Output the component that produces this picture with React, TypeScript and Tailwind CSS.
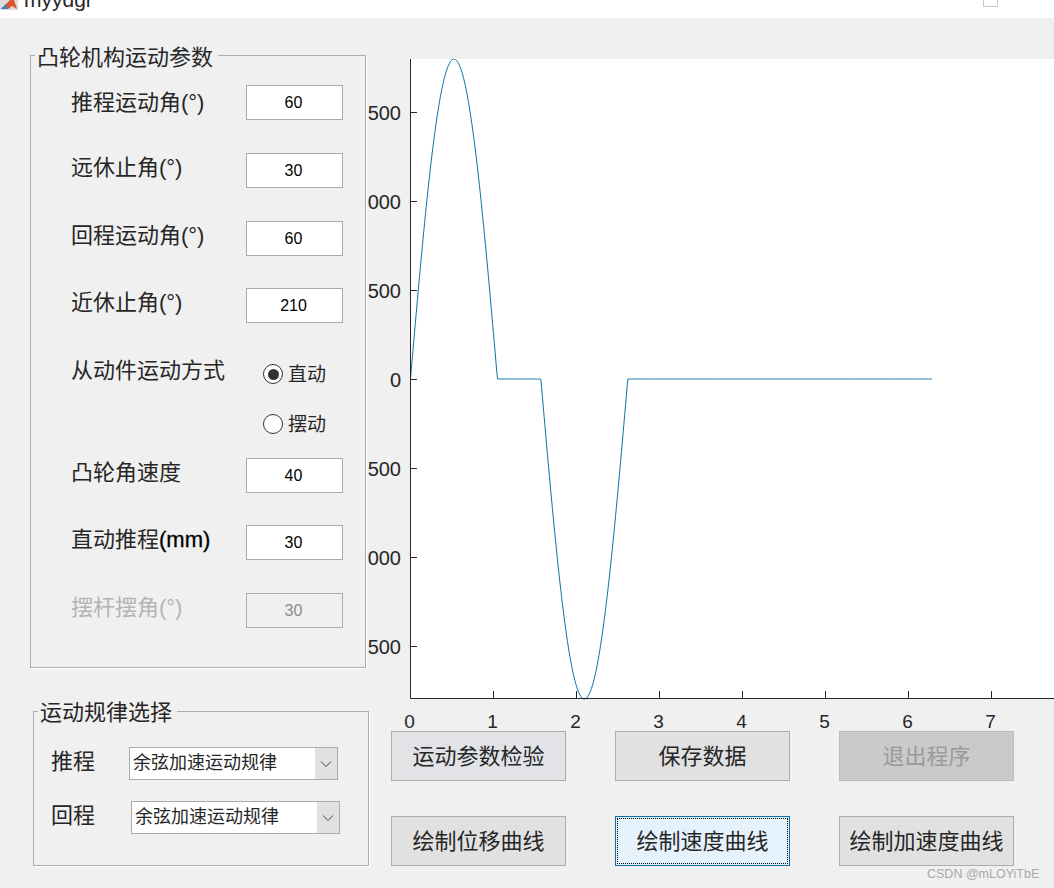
import { ReactNode } from 'react'

const FONT = "font-['Liberation_Sans','Noto_Sans_CJK_SC',sans-serif]"

// velocity curve: x origin 410.5 (83px per unit), y zero at 379 (89px per 500)
function buildCurve() {
  const pts: string[] = []
  const ox = 44.5
  const oy = 320
  const step = 0.01
  for (let t = 0; t <= 6.2832; t += step) {
    let v = 0
    if (t < Math.PI / 3) v = Math.sin(3 * t)
    else if (t >= Math.PI / 2 && t < (5 * Math.PI) / 6) v = -Math.sin(3 * (t - Math.PI / 2))
    pts.push(`${(ox + t * 83).toFixed(2)},${(oy - v * 320).toFixed(2)}`)
  }
  return pts.join(' ')
}

function Plot() {
  const yTicks = [
    { y: 53, label: '500' },
    { y: 142, label: '000' },
    { y: 231, label: '500' },
    { y: 320, label: '0' },
    { y: 409, label: '500' },
    { y: 498, label: '000' },
    { y: 587, label: '500' },
  ]
  const xTicks = [0, 1, 2, 3, 4, 5, 6, 7]
  return (
    <svg width="688" height="672" className="block shrink-0">
      <rect x="44" y="0" width="644" height="639" fill="#ffffff" />
      <polyline points={buildCurve()} fill="none" stroke="#0a72ad" strokeWidth="1" />
      <path d="M44.5 0V639.5H688" fill="none" stroke="#262626" strokeWidth="1" />
      {yTicks.map((t) => (
        <g key={t.y}>
          <path d={`M44.5 ${t.y + 0.5}H51`} stroke="#262626" />
          <text x="35" y={t.y + 8} textAnchor="end" fontSize="20" fill="#262626" fontFamily="Liberation Sans">
            {t.label}
          </text>
        </g>
      ))}
      {xTicks.map((n) => (
        <g key={n}>
          <path d={`M${44.5 + n * 83} 639V632`} stroke="#262626" />
          <text x={43.5 + n * 83} y="669" textAnchor="middle" fontSize="19" fill="#262626" fontFamily="Liberation Sans">
            {n}
          </text>
        </g>
      ))}
    </svg>
  )
}

function Group({ title, className, legendClass, children }: {
  title: string
  className: string
  legendClass: string
  children: ReactNode
}) {
  return (
    <fieldset className={`border border-[#adadad] shadow-[1px_1px_0_#ffffff] ${className}`}>
      <legend className={`relative ml-[4px] pl-[2px] pr-[5px] text-[22px] leading-[22px] text-[#262626] ${legendClass}`}>{title}</legend>
      {children}
    </fieldset>
  )
}

function ParamRow({ label, value, className = '', disabled = false, labelClass = '-mt-[6px]' }: {
  label: ReactNode
  value: string
  className?: string
  disabled?: boolean
  labelClass?: string
}) {
  return (
    <div className={`flex h-[35px] items-center pl-[40px] ${className}`}>
      <span className={`w-[175px] text-[22px] ${labelClass} ${disabled ? 'text-[#b4b4b4]' : 'text-[#262626]'}`}>{label}</span>
      <div
        className={`flex h-[35px] w-[97px] items-center justify-center border border-[#ababab] pr-[2px] text-[16px] ${
          disabled ? 'text-[#8c8c8c]' : 'bg-white text-black'
        }`}
      >
        {value}
      </div>
    </div>
  )
}

function Radio({ label, checked = false }: { label: string; checked?: boolean }) {
  return (
    <div className="flex items-center gap-[5px] text-[19px] leading-[24px] text-[#262626]">
      <span className="flex h-[20px] w-[20px] items-center justify-center rounded-full border border-[#333333] bg-white">
        {checked && <span className="h-[11px] w-[11px] rounded-full bg-[#333333]" />}
      </span>
      <span className="pt-[2px]">{label}</span>
    </div>
  )
}

function SelectRow({ label, className, selectClass }: { label: string; className: string; selectClass: string }) {
  return (
    <div className={`flex h-[33px] items-center ${className}`}>
      <span className="text-[22px] leading-[22px] text-[#262626] -mt-[3px]">{label}</span>
      <div className={`flex h-[33px] w-[209px] items-center border border-[#ababab] bg-white ${selectClass}`}>
        <span className="flex-1 pl-[3px] text-[18px] text-[#262626]">余弦加速运动规律</span>
        <span className="flex h-full w-[22px] items-center justify-center bg-[#e1e1e1]">
          <svg width="12" height="8" viewBox="0 0 12 8">
            <path d="M1 1.5l5 5 5-5" fill="none" stroke="#444444" strokeWidth="1" />
          </svg>
        </span>
      </div>
    </div>
  )
}

function Btn({ label, className = 'bg-[#e1e1e1] border-[#adadad] text-[#262626]' }: { label: string; className?: string }) {
  return (
    <div className={`flex h-[50px] w-[175px] items-center justify-center border text-[22px] ${className}`}>{label}</div>
  )
}

export default function App() {
  return (
    <div className={`relative h-[888px] w-[1054px] overflow-hidden bg-[#f0f0f0] ${FONT}`}>
      <div className="flex h-[18px] items-start overflow-hidden bg-white">
        <svg width="18" height="10" viewBox="0 0 18 10" className="shrink-0">
          <rect width="18" height="10" fill="#dcdcdc" />
          <path d="M1 9L6 4L10 0H14L17 9L12 6L8 9Z" fill="#d8572a" />
          <path d="M1 9L6 4L8 9Z" fill="#3f7fb5" />
        </svg>
        <span className="-mt-[11px] ml-[6px] text-[21px] leading-[22px] text-[#262626]">myydgr</span>
        <span className="ml-auto mr-[56px] h-[7px] w-[15px] border border-t-0 border-[#c8c8c8]" />
      </div>

      <div className="flex">
        <div className="w-[366px] shrink-0 pl-[30px]">
          <Group title="凸轮机构运动参数" className="mt-[26px] h-[624px] w-[336px]" legendClass="top-[3px]">
            <ParamRow label="推程运动角(°)" value="60" className="mt-[19px]" labelClass="" />
            <ParamRow label="远休止角(°)" value="30" className="mt-[33px]" />
            <ParamRow label="回程运动角(°)" value="60" className="mt-[33px]" />
            <ParamRow label="近休止角(°)" value="210" className="mt-[32px]" />
            <div className="mt-[34px] flex h-[34px] items-center pl-[40px]">
              <span className="-mt-[8px] w-[192px] text-[22px] text-[#262626]">从动件运动方式</span>
              <Radio label="直动" checked />
            </div>
            <div className="mt-[16px] flex h-[34px] items-center pl-[232px]">
              <Radio label="摆动" />
            </div>
            <ParamRow label="凸轮角速度" value="40" className="mt-[17px]" />
            <ParamRow
              label={
                <>
                  直动推程<span className="text-black [-webkit-text-stroke:0.3px_black]">(mm)</span>
                </>
              }
              value="30"
              className="mt-[32px]"
            />
            <ParamRow label="摆杆摆角(°)" value="30" className="mt-[33px]" disabled />
          </Group>

          <Group title="运动规律选择" className="mt-[32px] ml-[3px] h-[166px] w-[336px]" legendClass="top-[2px]">
            <SelectRow label="推程" className="mt-[25px] pl-[17px]" selectClass="ml-[34px]" />
            <SelectRow label="回程" className="mt-[21px] pl-[17px]" selectClass="ml-[36px]" />
          </Group>
        </div>

        <div className="min-w-0 flex-1 pt-[41px]">
          <Plot />
          <div className="flex gap-[49px] pl-[25px]">
            <Btn label="运动参数检验" className="bg-[#e1e3e6] border-[#adadad] text-[#262626]" />
            <Btn label="保存数据" />
            <Btn label="退出程序" className="bg-[#cacaca] border-[#bcbcbc] text-[#9a9a9a]" />
          </div>
          <div className="mt-[35px] flex gap-[49px] pl-[25px]">
            <Btn label="绘制位移曲线" />
            <div className="flex h-[50px] w-[175px] items-center justify-center border border-[#0a6fa8] bg-[#e5f1fb] p-px text-[22px] text-[#262626]">
              <div className="flex h-full w-full items-center justify-center border border-dotted border-black">绘制速度曲线</div>
            </div>
            <Btn label="绘制加速度曲线" />
          </div>
        </div>
      </div>

      <span className="absolute left-[927px] top-[866px] text-[12.5px] leading-[16px] text-[#a8a8a8]">CSDN @mLOYiTbE</span>
    </div>
  )
}
